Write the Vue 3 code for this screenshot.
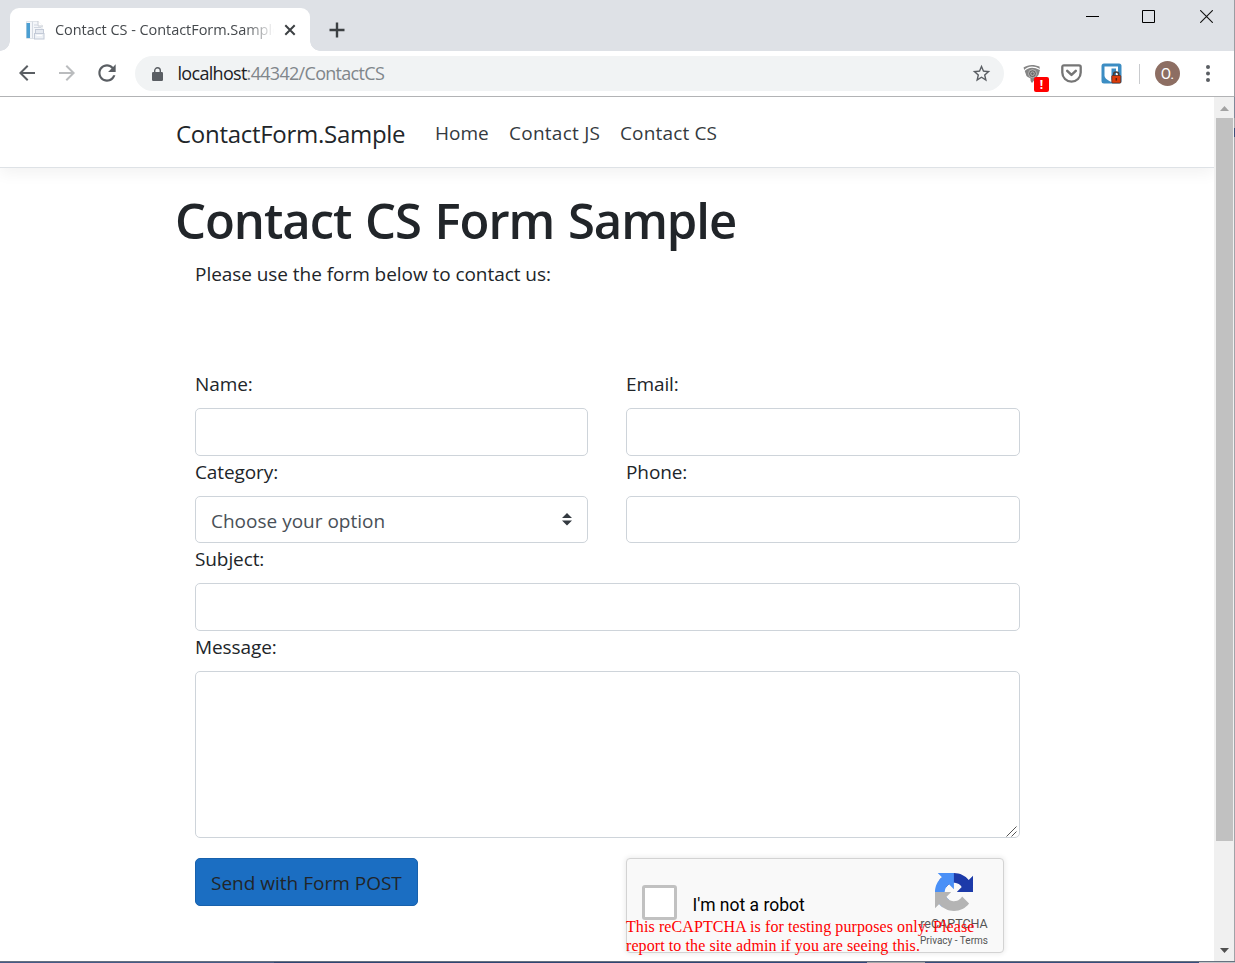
<script setup>
const links = [
  { label: 'Home', cls: 'home' },
  { label: 'Contact JS', cls: 'js' },
  { label: 'Contact CS', cls: 'cs' },
]
</script>

<template>
  <div class="screen">
    <div class="window">
      <header class="tabstrip">
        <i class="foot left"></i>
        <div class="tab">
          <svg class="favicon" width="20" height="20" viewBox="0 0 20 20">
            <path d="M1.500 1.500H13l4 4V18.500H1.500z" fill="#f4f6f9" stroke="#dfe3e8" />
            <path d="M13 1v5h5" fill="#fff" stroke="#c9cdd4" />
            <rect x="1.500" y="3" width="3.500" height="15" fill="#4b9fd2" />
            <path d="M7.500 1.500v17" stroke="#d5dae2" />
            <path d="M9 5h3.500M9 7.500h7" stroke="#d0d6e0" />
            <rect x="10.500" y="9.500" width="8" height="4.500" fill="#e6eaf1" stroke="#c3cad7" />
            <rect x="9.500" y="13.500" width="9.500" height="5.500" fill="#eef1f6" stroke="#c3cad7" />
            <path d="M11.500 15.500h5.500" stroke="#fff" />
          </svg>
          <span class="tab-title"><span>Contact CS - ContactForm.Sample</span></span>
          <svg class="close" width="12" height="12" viewBox="0 0 12 12"><path d="M1.300 1.300l9.400 9.400M10.700 1.300l-9.400 9.400" stroke="#3c4043" stroke-width="2" /></svg>
        </div>
        <i class="foot right"></i>
        <svg class="plus" width="16" height="16" viewBox="0 0 16 16"><path d="M8 .5v15M.5 8h15" stroke="#3c4043" stroke-width="2.400" /></svg>
        <div class="controls">
          <svg width="13" height="13" viewBox="0 0 13 13"><path d="M0 6.500h13" stroke="#000" /></svg>
          <svg width="13" height="13" viewBox="0 0 13 13"><path d="M.5.5h12v12H.5z" fill="none" stroke="#000" /></svg>
          <svg class="win-close" width="13" height="13" viewBox="0 0 13 13"><path d="M.2.200l12.600 12.600M12.800.2L.2 12.800" stroke="#111" stroke-width="1.100" /></svg>
        </div>
      </header>

      <div class="toolbar">
        <svg class="back" width="24" height="24" viewBox="0 0 24 24" fill="#5a5e63"><path d="M20 11H7.830l5.590-5.590L12 4l-8 8 8 8 1.410-1.410L7.830 13H20z" /></svg>
        <svg class="forward" width="24" height="24" viewBox="0 0 24 24" fill="#babcbe"><path d="M12 4l-1.410 1.410L16.170 11H4v2h12.170l-5.580 5.590L12 20l8-8z" /></svg>
        <svg class="reload" width="26" height="26" viewBox="0 0 24 24" fill="#5a5e63"><path d="M17.650 6.350C16.200 4.900 14.210 4 12 4c-4.420 0-7.990 3.580-7.990 8s3.570 8 7.990 8c3.730 0 6.840-2.550 7.730-6h-2.080c-.82 2.330-3.040 4-5.650 4-3.310 0-6-2.690-6-6s2.690-6 6-6c1.660 0 3.140.69 4.220 1.780L13 11h7V4z" /></svg>
        <div class="omnibox">
          <svg class="lock" width="11" height="14" viewBox="0 0 11 14"><path d="M2.700 6V3.600a2.800 2.800 0 0 1 5.600 0V6" fill="none" stroke="#5a5e63" stroke-width="1.400" /><rect y="5" width="11" height="9" rx="1.200" fill="#5a5e63" /></svg>
          <span class="url">localhost<em>:44342/ContactCS</em></span>
          <svg class="star" width="21" height="21" viewBox="0 0 24 24" fill="#5a5e63"><path d="M22 9.240l-7.190-.62L12 2 9.190 8.630 2 9.240l5.460 4.730L5.820 21 12 17.270 18.180 21l-1.630-7.030zM12 15.400l-3.760 2.270 1-4.280-3.320-2.880 4.380-.38L12 6.100l1.710 4.040 4.380.38-3.320 2.880 1 4.280z" /></svg>
        </div>
        <div class="ext">
          <svg width="18" height="20" viewBox="0 0 18 20">
            <path d="M.5 3.500C5 .2 11 .2 16.500 2.500L17 6 15.500 11 9 19 3.500 12z" fill="#858585" />
            <path d="M1 7C5 2.500 11 2.300 17 5.500" fill="none" stroke="#fff" stroke-width="1.100" />
            <circle cx="9.500" cy="9.700" r="4" fill="#6c6c6c" stroke="#c6c6c6" stroke-width=".8" />
            <circle cx="9.500" cy="9.700" r="1.800" fill="none" stroke="#c4c4c4" stroke-width=".8" />
            <path d="M3 12l4.500 2.500v4z" fill="#fff" />
          </svg>
          <b class="badge">!</b>
        </div>
        <svg class="pocket" width="21" height="19" viewBox="0 0 21 19" fill="none" stroke="#757575"><path d="M3 1.300h15q1.700 0 1.700 1.700v5.500a9.200 9.200 0 0 1-18.400 0V3Q1.300 1.300 3 1.300z" stroke-width="2.300" /><path d="M6.200 6.800l4.300 4.100 4.300-4.100" stroke-width="2.500" stroke-linecap="round" stroke-linejoin="round" /></svg>
        <svg class="vault" width="21" height="21" viewBox="0 0 21 21">
          <rect x=".5" y=".5" width="20" height="20" rx="2.500" fill="#3c8dc3" />
          <path d="M3.500 3.500h13.500v9c0 3-3 5-6.500 6.500C7 17.500 3.500 15.500 3.500 12.500z" fill="#fff" />
          <path d="M10.500 5.500h4.500v7c0 2-2 3.200-4.500 4.500z" fill="#3c8dc3" />
          <path d="M12.700 13v-1.500a2.500 2.500 0 0 1 5 0V13" fill="none" stroke="#453c38" stroke-width="1.600" />
          <rect x="10.800" y="12.500" width="9" height="7.500" rx=".8" fill="#dc3c0c" stroke="#553025" stroke-width=".8" />
          <path d="M15.300 15v2.600" stroke="#5a2010" stroke-width="1.500" />
        </svg>
        <i class="divider"></i>
        <span class="avatar">O.</span>
        <svg class="dots" width="4" height="17" viewBox="0 0 4 17" fill="#5a5e63"><circle cx="2" cy="2" r="2" /><circle cx="2" cy="8.500" r="2" /><circle cx="2" cy="15" r="2" /></svg>
      </div>

      <div class="viewport">
        <main class="page">
          <nav class="navbar">
            <span class="brand">ContactForm.Sample</span>
            <a v-for="l in links" :key="l.label" :class="l.cls">{{ l.label }}</a>
          </nav>
          <div class="container">
            <h1><span>Contact CS Form Sample</span></h1>
            <div class="form">
              <p class="intro">Please use the form below to contact us:</p>
              <div class="row">
                <div class="field"><label>Name:</label><div class="control"></div></div>
                <div class="field"><label>Email:</label><div class="control"></div></div>
              </div>
              <div class="row">
                <div class="field">
                  <label>Category:</label>
                  <div class="control select">
                    <span>Choose your option</span>
                    <svg width="10" height="13" viewBox="0 0 10 13" fill="#343a40"><path d="M0 5L5 0l5 5zM0 7.500h10l-5 5z" /></svg>
                  </div>
                </div>
                <div class="field"><label>Phone:</label><div class="control"></div></div>
              </div>
              <div class="field"><label>Subject:</label><div class="control"></div></div>
              <div class="field">
                <label>Message:</label>
                <div class="control area">
                  <svg width="11" height="11" viewBox="0 0 11 11"><path d="M.5 10.500l10-10M5.500 10.500l5-5" stroke="#555" stroke-width="1" /></svg>
                </div>
              </div>
              <div class="row actions">
                <div class="cell"><button><span>Send with Form POST</span></button></div>
                <div class="cell">
                  <div class="captcha">
                    <i class="check"></i>
                    <span class="robot">I'm not a robot</span>
                    <div class="cap-brand">
                      <svg width="38" height="38" viewBox="0 0 64 64">
                        <path fill="#1c3aa9" d="M64 31.955l-.033-1.370V4.687l-7.160 7.160C50.948 4.674 42.033.093 32.050.093c-10.400 0-19.622 4.960-25.458 12.640l11.736 11.860a15.550 15.550 0 0 1 4.754-5.334c2.050-1.600 4.952-2.906 8.968-2.906.485 0 .86.057 1.135.163 4.976.393 9.288 3.140 11.828 7.124l-8.307 8.307L64 31.953" />
                        <path fill="#4a90f7" d="M31.862.094l-1.370.033H4.594l7.160 7.160C4.580 13.147 0 22.060 0 32.046c0 10.400 4.960 19.622 12.640 25.458L24.500 45.768a15.550 15.550 0 0 1-5.334-4.754c-1.600-2.050-2.906-4.952-2.906-8.968 0-.485.057-.86.163-1.135.393-4.976 3.140-9.288 7.124-11.828l8.307 8.307L31.860.095" />
                        <path fill="#b4b4b4" d="M.001 32.045l.033 1.370v25.898l7.160-7.160c5.860 7.173 14.774 11.754 24.760 11.754 10.400 0 19.622-4.960 25.458-12.640l-11.736-11.860a15.550 15.550 0 0 1-4.754 5.334c-2.050 1.600-4.952 2.906-8.968 2.906-.485 0-.86-.057-1.135-.163-4.976-.393-9.288-3.140-11.828-7.124l8.307-8.307-27.295.032" />
                      </svg>
                      <span class="cap-name">reCAPTCHA</span>
                      <span class="cap-links">Privacy - Terms</span>
                    </div>
                    <p class="warning">This reCAPTCHA is for testing purposes only. Please<br />report to the site admin if you are seeing this.</p>
                  </div>
                </div>
              </div>
            </div>
          </div>
        </main>
        <aside class="scrollbar">
          <svg width="9" height="5" viewBox="0 0 9 5"><path d="M4.500 0L9 5H0z" fill="#a3a3a3" /></svg>
          <i class="thumb"></i>
          <svg class="down" width="9" height="5" viewBox="0 0 9 5"><path d="M0 0h9L4.500 5z" fill="#505050" /></svg>
        </aside>
      </div>
    </div>
    <i class="edge-right"></i>
    <i class="edge-bottom"></i>
  </div>
</template>

<style>
body { margin: 0; overflow: hidden; }
</style>

<style scoped>
* { box-sizing: border-box; }
svg { display: block; flex: none; }
i { display: block; flex: none; }
.screen {
  width: 1235px; height: 963px; display: grid; overflow: hidden;
  grid-template-columns: 1234px 1px; grid-template-rows: 961px 2px;
  font-family: "Open Sans", "Noto Sans", sans-serif; color: #212529; white-space: nowrap;
}
.window { display: flex; flex-direction: column; background: #fff; min-width: 0; }
.edge-right { background: linear-gradient(#9a9ca2 0 97px, #7f8798 97px 118px, #a4a5a8 118px 128px, #3d4f78 128px 137px, #a1a3a8 137px); }
.edge-bottom {
  grid-column: 1 / 3; border-top: 1px solid #66717f;
  background: linear-gradient(90deg, #465a86 0 274px, #2f4573 274px 720px, #30477a 720px 867px, #a6a7aa 867px 925px, #374d7c 925px 1199px, #c4c4c8 1199px);
}

.tabstrip { height: 51px; background: #dee1e6; display: flex; align-items: flex-end; }
.foot { width: 10px; height: 10px; }
.foot.left { background: radial-gradient(circle at 0 0, transparent 9.500px, #fff 10px); }
.foot.right { background: radial-gradient(circle at 100% 0, transparent 9.500px, #fff 10px); }
.tab { width: 300px; height: 43px; background: #fff; border-radius: 9px 9px 0 0; display: flex; align-items: center; padding: 0 14px 0 15px; }
.tab-title { margin-left: 10px; width: 220px; overflow: hidden; font-size: 14.500px; color: #45494d; letter-spacing: -.05px; mask-image: linear-gradient(90deg, #000 190px, transparent 219px); }
.close { margin-left: 9px; }
.plus { margin: 0 0 13px 9px; }
.controls { margin: 0 21.500px 28px auto; display: flex; gap: 43px; }
.win-close { margin-left: 1.500px; }

.toolbar { height: 46px; border-bottom: 1px solid #b2b3b5; display: flex; align-items: center; }
.toolbar > .back, .toolbar > .forward, .toolbar > .reload { margin-bottom: 1px; }
.back { margin-left: 15px; }
.forward { margin-left: 16px; }
.reload { margin-left: 15px; }
.omnibox { margin-left: 15px; width: 869px; flex: none; height: 35px; border-radius: 18px; background: #f1f3f4; display: flex; align-items: center; padding: 0 12px 0 17px; }
.url { margin: -2px 0 0 14.500px; font-size: 18px; color: #202124; letter-spacing: -.7px; }
.url em { font-style: normal; color: #80868b; }
.star { margin-left: auto; }
.ext { position: relative; margin-left: 19px; }
.badge { position: absolute; left: 11px; top: 13px; width: 15px; height: 15px; border-radius: 2px; background: #f00; color: #fff; font: bold 12px/15px "Open Sans", sans-serif; text-align: center; }
.pocket { margin-left: 20px; }
.vault { margin-left: 19px; }
.divider { width: 1px; height: 20px; background: #c9cbce; margin-left: 17px; }
.avatar { margin-left: 15px; width: 25px; height: 25px; border-radius: 50%; background: #8d6e63; color: #fff; font: 15px/26px Roboto, sans-serif; text-align: center; }
.dots { margin-left: 25.500px; }

.viewport { height: 864px; display: flex; }
.page { width: 1214px; overflow: hidden; }
.navbar { height: 71px; border-bottom: 1px solid #dee2e6; box-shadow: 0 5px 15px rgba(0, 0, 0, .055); padding: 2px 0 0 176px; display: flex; align-items: center; font-size: 19px; color: #343a40; }
.brand { font-size: 24px; width: 259px; color: #212529; letter-spacing: -.28px; }
.home { width: 74px; }
.js { width: 111px; letter-spacing: .25px; }
.cs { letter-spacing: .15px; }
.container { padding: 22px 0 0 175px; }
h1 { margin: 0; height: 69px; font-size: 49px; line-height: 60px; font-weight: 600; letter-spacing: -1.050px; word-spacing: 2px; }
.form { margin-left: 20px; width: 825px; }
.intro { margin: 0; height: 109px; font-size: 19px; line-height: 30px; letter-spacing: -.05px; }
.row { display: grid; grid-template-columns: 393px 394px; gap: 38px; }
label { display: block; height: 40px; padding-top: 1px; line-height: 30px; font-size: 19px; letter-spacing: -.1px; }
.control { height: 47.500px; border: 1px solid #ced4da; border-radius: 5px; background: #fff; }
.select { display: flex; align-items: center; justify-content: space-between; padding: 0 15px; font-size: 19px; color: #495057; }
.select span { padding-top: 4px; }
.area { height: 167px; display: flex; align-items: flex-end; justify-content: flex-end; padding: 1px 2px 0 0; }
.actions { padding-top: 20px; }
button { display: block; width: 223px; height: 48px; border: 1px solid #1861ac; border-radius: 5px; background: #1b6ec2; padding: 2px 0 0 15px; text-align: left; font: 19px/44px "Open Sans", sans-serif; color: #212529; }
.captcha { position: relative; width: 378px; height: 95px; border: 1px solid #d3d3d3; border-radius: 4px; background: #f9f9f9; box-shadow: 0 0 5px 1px rgba(0, 0, 0, .08); display: flex; align-items: flex-start; font-family: Roboto, sans-serif; }
.check { width: 35px; height: 35px; margin: 26px 0 0 15px; border: 3px solid #c1c1c1; border-radius: 3px; background: #fff; }
.robot { margin: 34px 0 0 15.500px; font-size: 17.500px; line-height: 24px; color: #000; }
.cap-brand { margin: 14px 14px 0 auto; width: 70px; display: flex; flex-direction: column; align-items: center; color: #555; }
.cap-name { margin-top: 5px; font-size: 12.500px; line-height: 16px; }
.cap-links { margin-top: 3px; font-size: 10px; line-height: 12px; }
.warning { position: absolute; left: -1px; top: 58px; margin: 0; font: 16px/19px "Liberation Serif", serif; letter-spacing: .09px; color: #f00; }

.scrollbar { width: 20px; background: #f0f0f0; display: flex; flex-direction: column; align-items: center; padding: 9px 0 8px; }
.thumb { margin: 7px 0 0 1px; width: 17px; height: 723px; background: #c1c1c1; }
.down { margin-top: auto; }
</style>
